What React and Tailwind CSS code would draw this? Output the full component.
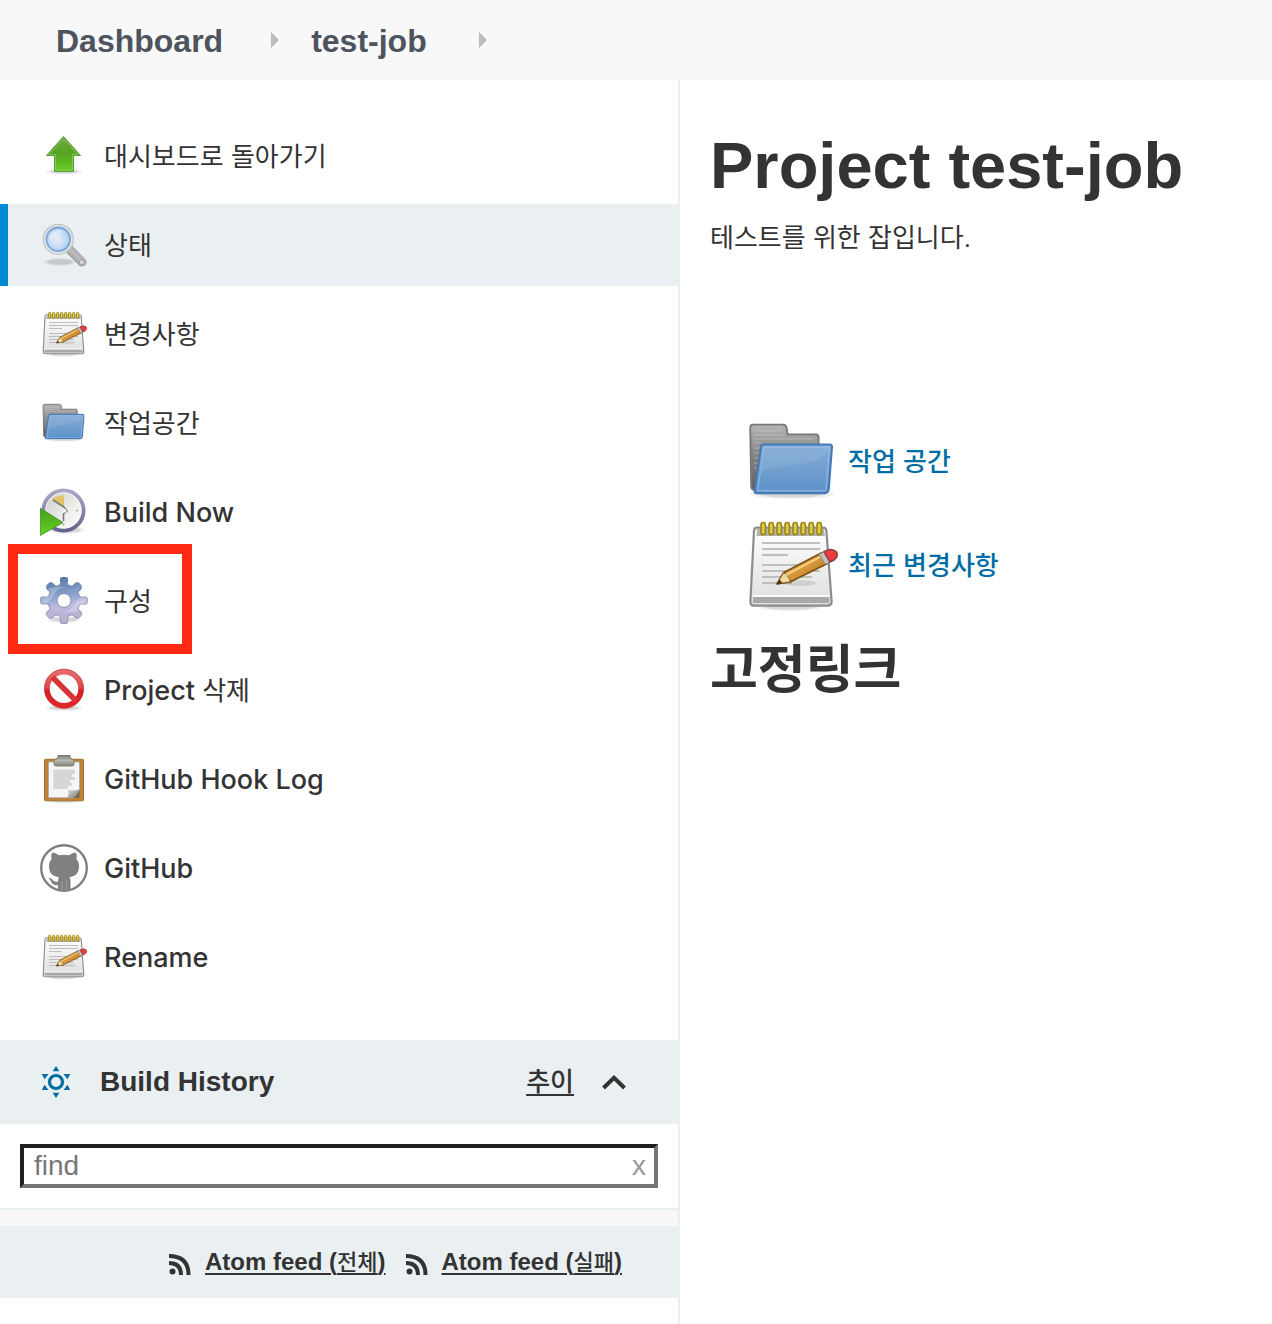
import React from "react";

const ICON = "size-12 shrink-0";

function Shadow({ cx = 24, cy = 41, rx = 17, ry = 3 }) {
  return (
    <>
      <ellipse cx={cx} cy={cy} rx={rx} ry={ry} fill="#000" opacity=".06" />
      <ellipse cx={cx} cy={cy} rx={rx * 0.8} ry={ry * 0.7} fill="#000" opacity=".1" />
    </>
  );
}

function UpIcon() {
  return (
    <svg viewBox="0 0 48 48" className={ICON} aria-hidden="true">
      <defs>
        <linearGradient id="up" x1="0" y1="0" x2="0" y2="1">
          <stop offset="0" stopColor="#6fa844" />
          <stop offset=".5" stopColor="#55a41f" />
          <stop offset="1" stopColor="#66cf28" />
        </linearGradient>
      </defs>
      <Shadow cx={24} cy={39.5} rx={18} ry={3} />
      <path d="M23.500 4.500 40.500 23.500H33.500V39.500H14.500V23.500H6.500Z" fill="url(#up)" stroke="#5c9c38" strokeWidth="1" strokeLinejoin="round" />
      <path d="M23.500 6.500 38 22.500H32.500V38H15.500V22.500H9Z" fill="none" stroke="#9fdc78" strokeWidth="1" opacity=".55" />
    </svg>
  );
}

function SearchIcon() {
  return (
    <svg viewBox="0 0 48 48" className={ICON} aria-hidden="true">
      <defs>
        <radialGradient id="lens" cx=".45" cy=".5" r=".6">
          <stop offset="0" stopColor="#e6effa" />
          <stop offset=".7" stopColor="#bcd6f2" />
          <stop offset="1" stopColor="#8fb6e2" />
        </radialGradient>
        <linearGradient id="handle" x1="0" y1="1" x2="1" y2="0">
          <stop offset="0" stopColor="#777" />
          <stop offset=".5" stopColor="#bdbdbd" />
          <stop offset="1" stopColor="#858585" />
        </linearGradient>
      </defs>
      <Shadow cx={20} cy={41} rx={16} ry={4} />
      <path d="M28 28 32 25 45.500 39Q47 42 45 44Q42 46 39.500 44.500L27 32Z" fill="url(#handle)" stroke="#9a9a9a" strokeWidth=".8" />
      <circle cx="41.800" cy="41.200" r="2.600" fill="#d8d8d8" stroke="#909090" strokeWidth=".8" />
      <circle cx="18.300" cy="18.300" r="15" fill="#e3e4e2" stroke="#c0c3c3" strokeWidth="1.300" />
      <circle cx="18.300" cy="18.300" r="11.800" fill="url(#lens)" stroke="#7ba5d8" strokeWidth="1.800" />
      <path d="M9.500 20C9 12 15 8 21 9.500C25 11 18 14 9.500 20Z" fill="#fff" opacity=".35" />
    </svg>
  );
}

const RINGS = [9.5, 13.5, 17.5, 21.5, 25.5, 29.5, 33.5, 37.5];
const LINES = [
  [12.5, 38],
  [15.5, 38],
  [18.5, 22],
  [23.5, 38],
  [26.5, 38],
  [29.5, 34],
  [32.5, 24],
];

function NotepadIcon({ id, className = ICON }) {
  return (
    <svg viewBox="0 0 48 48" className={className} aria-hidden="true">
      <defs>
        <linearGradient id={id + "p"} x1="0" y1="0" x2="0" y2="1">
          <stop offset="0" stopColor="#fff" />
          <stop offset="1" stopColor="#dedede" />
        </linearGradient>
        <linearGradient id={id + "w"} x1="0" y1="0" x2="1" y2="1">
          <stop offset="0" stopColor="#edb85d" />
          <stop offset=".5" stopColor="#d9983a" />
          <stop offset="1" stopColor="#9c661c" />
        </linearGradient>
      </defs>
      <Shadow cx={23} cy={44.5} rx={16} ry={2} />
      <path d="M6.500 4.800H39.500Q41 4.800 41.200 6.500L43.800 41.500Q43.900 43.800 41.800 43.800H5Q3 43.800 3.200 41.500L5 6.500Q5.100 4.800 6.500 4.800Z" fill={`url(#${id}p)`} stroke="#8c8c8c" strokeWidth="1.100" />
      <path d="M6.500 5.500H40L40.400 9H6.300Z" fill="#b3b3a8" />
      <path d="M4.500 39.500H42.600V42.500H4.500Z" fill="#a9a9a9" />
      <path d="M4.500 39H42.600" stroke="#fff" strokeWidth=".8" />
      {RINGS.map((x) => (
        <rect key={x} x={x - 1} y="2.300" width="2.200" height="6" rx="1.100" fill="#e2cc43" stroke="#9a8518" strokeWidth=".8" />
      ))}
      {LINES.map(([y, x2]) => (
        <path key={y} d={`M9 ${y}H${x2}`} stroke="#bfbfbf" strokeWidth="1.100" />
      ))}
      <ellipse cx="28" cy="32.500" rx="8" ry="1.500" fill="#000" opacity=".1" />
      <path d="M16.500 33 19.700 27.400 38.800 17.400 42 22.600 23 32Z" fill={`url(#${id}w)`} stroke="#7c4f12" strokeWidth=".8" strokeLinejoin="round" />
      <path d="M16.500 33 19.700 27.400Q21.500 27.600 21.800 29.300Q23.300 30 23 32Z" fill="#efd9a0" stroke="#7c5a20" strokeWidth=".5" />
      <path d="M16.300 33.100 17.700 30.800 19.400 32.600Z" fill="#4a3210" />
      <path d="M21 28.500 39 18.900" stroke="#f5cf86" strokeWidth="1" />
      <path d="M37.500 18.100 40 16.900 43 22 40.700 23.200Z" fill="#c4bfc0" stroke="#8b8182" strokeWidth=".5" />
      <path d="M40 16.900Q44 14.600 46.200 17Q47.800 20 43 22Z" fill="#ee3b3b" stroke="#8c4040" strokeWidth=".8" />
    </svg>
  );
}

function FolderIcon({ id, className = ICON }) {
  return (
    <svg viewBox="0 0 48 48" className={className} aria-hidden="true">
      <defs>
        <linearGradient id={id + "b"} x1="0" y1="0" x2="0" y2="1">
          <stop offset="0" stopColor="#b5b5b5" />
          <stop offset=".4" stopColor="#8a8a8a" />
          <stop offset="1" stopColor="#5c5c5c" />
        </linearGradient>
        <linearGradient id={id + "f"} x1="0" y1="0" x2="0" y2="1">
          <stop offset="0" stopColor="#83abd8" />
          <stop offset=".5" stopColor="#729fcf" />
          <stop offset="1" stopColor="#5b91cb" />
        </linearGradient>
      </defs>
      <Shadow cx={24} cy={40} rx={21} ry={2.5} />
      <path d="M4.500 5.300H19.500Q21 5.300 21.300 7L21.800 10.200H36Q37.300 10.200 37.300 11.500V38H5Q3.800 38 3.600 36.500L3.100 6.800Q3.100 5.300 4.500 5.300Z" fill={`url(#${id}b)`} stroke="#777" strokeWidth=".9" />
      <path d="M5 8.500H19M5 10.500H19M5 12.500H35M5 14.500H8M5 17H8M5 19.500H8M5 22H7.500M5 24.500H7M5 27H7" stroke="#cfcfcf" strokeWidth=".6" opacity=".5" />
      <path d="M9.800 15.300H42.900Q44.100 15.300 44 16.500L42.400 37.500Q42.200 39.600 40.200 39.600H6.200Q5.200 39.600 5.300 38.500L8.500 16.500Q8.700 15.300 9.800 15.300Z" fill={`url(#${id}f)`} stroke="#4479b5" strokeWidth="1" />
      <path d="M10 16.600H42.600L41.100 37.500Q41 38.400 40.100 38.400H6.800Z" fill="none" stroke="#a3c3e4" strokeWidth=".7" opacity=".6" />
      <path d="M10.300 17.300H42C41 26 22 24.500 8.600 29Z" fill="#fff" opacity=".08" />
    </svg>
  );
}

function ClockIcon() {
  return (
    <svg viewBox="0 0 48 48" className={ICON} aria-hidden="true">
      <defs>
        <linearGradient id="rim" x1="0" y1="0" x2="0" y2="1">
          <stop offset="0" stopColor="#a9a9c6" />
          <stop offset="1" stopColor="#66648f" />
        </linearGradient>
        <linearGradient id="face" x1="0" y1="0" x2="1" y2="1">
          <stop offset="0" stopColor="#c9c9c5" />
          <stop offset=".6" stopColor="#efefec" />
          <stop offset="1" stopColor="#fff" />
        </linearGradient>
        <linearGradient id="play" x1="0" y1="0" x2="0" y2="1">
          <stop offset="0" stopColor="#4a9d1f" />
          <stop offset="1" stopColor="#5fd41f" />
        </linearGradient>
      </defs>
      <Shadow cx={26} cy={42} rx={18} ry={4} />
      <circle cx="23.500" cy="22.500" r="20" fill="url(#face)" stroke="url(#rim)" strokeWidth="4" />
      <circle cx="23.500" cy="22.500" r="17.700" fill="none" stroke="#fff" strokeWidth=".8" />
      <path d="M12 11Q17 7.500 24 7.500V18.500Z" fill="#e2c266" />
      <path d="M13 12 24 19 27 23 23.500 26V33" fill="none" stroke="#77777c" strokeWidth="1.600" />
      <circle cx="24.500" cy="22.800" r="2" fill="#f5f5f5" />
      <circle cx="37" cy="22.500" r=".9" fill="#aaa" />
      <circle cx="23.500" cy="36.500" r=".9" fill="#999" />
      <path d="M0 20 23 34.500 0 47.500Z" fill="url(#play)" stroke="#4f9a35" strokeWidth="1" />
    </svg>
  );
}

const TEETH = [0, 45, 90, 135, 180, 225, 270, 315];

function GearIcon() {
  return (
    <svg viewBox="0 0 48 48" className={ICON} aria-hidden="true">
      <defs>
        <linearGradient id="gear" gradientUnits="userSpaceOnUse" x1="18" y1="0" x2="26" y2="48">
          <stop offset="0" stopColor="#5478ab" />
          <stop offset=".4" stopColor="#8aa3cd" />
          <stop offset=".6" stopColor="#bfbadd" />
          <stop offset="1" stopColor="#b3accf" />
        </linearGradient>
        <mask id="gearhole">
          <rect width="48" height="48" fill="#fff" />
          <circle cx="24" cy="23.500" r="6.700" fill="#000" />
        </mask>
        <clipPath id="gearshape">
          <circle cx="24" cy="23.500" r="16.500" />
          <path d="M20.500 9 20 3Q20 0 22 0H26Q28 0 28 3L27.500 9Z" />
          <path d="M20.500 38 20 44Q20 47 22 47H26Q28 47 28 44L27.500 38Z" />
          <path d="M9 20 3 19.500Q0 19.500 0 21.500V25.500Q0 27.500 3 27.500L9 27Z" />
          <path d="M39 20 45 19.500Q48 19.500 48 21.500V25.500Q48 27.500 45 27.500L39 27Z" />
          <path d="M11.500 17 6.500 12.500Q5.500 10.500 7 8L9 6Q11 4.500 13 6L18 11Z" />
          <path d="M36.500 17 41.500 12.500Q42.500 10.500 41 8L39 6Q37 4.500 35 6L30 11Z" />
          <path d="M11.500 30 6.500 34.500Q5.500 36.500 7 39L9 41Q11 42.500 13 41L18 36Z" />
          <path d="M36.500 30 41.500 34.500Q42.500 36.500 41 39L39 41Q37 42.500 35 41L30 36Z" />
        </clipPath>
      </defs>
      <Shadow cx={24} cy={42.5} rx={16} ry={3.5} />
      <g mask="url(#gearhole)">
        <g clipPath="url(#gearshape)">
          <rect width="48" height="48" fill="url(#gear)" />
          <path d="M0 30Q10 26 14 18T26 10Q8 8 0 18Z" fill="#fff" opacity=".25" />
          <path d="M48 18Q38 20 34 28T20 34Q38 38 48 28Z" fill="#fff" opacity=".25" />
        </g>
      </g>
      {TEETH.map((a) => (
        <path key={a} d="M19 8.200Q20.500 8 20.400 5.500V2.500Q20.500 .6 22.500 .6H25.500Q27.500 .6 27.600 2.500V5.500Q27.500 8 29 8.200Q30.500 8.800 32 9.500" transform={`rotate(${a} 24 23.5)`} fill="none" stroke="#667296" strokeWidth=".9" opacity=".5" />
      ))}
      <circle cx="24" cy="23.500" r="6.900" fill="none" stroke="#8791b3" strokeWidth=".9" />
    </svg>
  );
}

function DeleteIcon() {
  return (
    <svg viewBox="0 0 48 48" className={ICON} aria-hidden="true">
      <defs>
        <linearGradient id="stop" gradientUnits="userSpaceOnUse" x1="0" y1="3" x2="0" y2="43">
          <stop offset="0" stopColor="#e87070" />
          <stop offset=".45" stopColor="#dc4a4c" />
          <stop offset=".55" stopColor="#d22024" />
          <stop offset="1" stopColor="#e5292c" />
        </linearGradient>
      </defs>
      <Shadow cx={24} cy={42} rx={18} ry={3} />
      <circle cx="24" cy="22.700" r="17" fill="#fff" stroke="url(#stop)" strokeWidth="5.500" />
      <path d="M12.500 11.200 35.500 34.200" stroke="#d73538" strokeWidth="5.500" />
      <circle cx="24" cy="22.700" r="19.500" fill="none" stroke="#cc3a3d" strokeWidth=".8" />
    </svg>
  );
}

function ClipboardIcon() {
  return (
    <svg viewBox="0 0 48 48" className={ICON} aria-hidden="true">
      <defs>
        <linearGradient id="clip" x1="0" y1="0" x2="0" y2="1">
          <stop offset="0" stopColor="#777b72" />
          <stop offset=".5" stopColor="#b8bbb3" />
          <stop offset="1" stopColor="#80847a" />
        </linearGradient>
        <linearGradient id="curl" x1="0" y1="0" x2="1" y2="1">
          <stop offset="0" stopColor="#e4e4e4" />
          <stop offset="1" stopColor="#777" />
        </linearGradient>
      </defs>
      <Shadow cx={24} cy={46} rx={16} ry={2} />
      <rect x="4.500" y="4.300" width="39" height="41.500" rx="1" fill="#bd8235" stroke="#a06f2b" strokeWidth="1" />
      <path d="M8.500 7H39.500V36L33 42.700H8.500Z" fill="#f6f6f6" stroke="#a9a9a9" strokeWidth=".8" />
      <path d="M33 42.700H39.500V34.500Z" fill="#706350" />
      <path d="M39.500 34Q35 36.500 28 34.500Q29.500 40 27 42.700H33.500Q38 40 39.500 34Z" fill="url(#curl)" />
      <path d="M13.500 14.500H35V19H32V22H35V25H30V28H32V31H28V34H13.500Z" fill="#d6d6d6" />
      <path d="M18 0H30V3Q34 3.500 34 6.500V9Q34 11 32 11H16Q14 11 14 9V6.500Q14 3.500 18 3Z" fill="url(#clip)" stroke="#73776e" strokeWidth=".8" />
    </svg>
  );
}

function OctocatIcon() {
  return (
    <svg viewBox="0 0 48 48" className={ICON} aria-hidden="true">
      <circle cx="24" cy="24" r="22.800" fill="#fff" stroke="#808080" strokeWidth="2.400" />
      <path d="M12 8.500Q15.500 8.800 19 11.200Q24 10.200 29 11.200Q32.500 8.800 36 8.500Q37.300 12 36.500 15Q39.300 18 39 23Q38.700 32.500 29.500 33.300Q30.500 34.500 30.500 37V46H18V41.200Q13 42 11 37.500Q10 35 8.500 34.500Q9.500 33.200 11.500 34.700Q14 38.500 18 37.500Q18 34.800 19 33.300Q9.300 32.500 9 23Q8.700 18 11.500 15Q10.700 12 12 8.500Z" fill="#808080" />
      <path d="M22 37V46M26.500 37V46" stroke="#a0a0a0" strokeWidth="1" />
    </svg>
  );
}

function SunIcon() {
  return (
    <svg viewBox="-16 -16 32 32" className="size-8 shrink-0" fill="#006ea6" aria-hidden="true">
      <circle r="6.500" fill="none" stroke="#006ea6" strokeWidth="3.200" />
      <path d="M0-16 3.400-10.800H-3.400ZM0 16 3.400 10.800H-3.400Z" />
      <path d="M7.500-8H14.200L11.500-2.800ZM-7.500-8H-14.200L-11.500-2.800ZM7.500 8H14.200L11.500 2.800ZM-7.500 8H-14.200L-11.500 2.800Z" />
    </svg>
  );
}

function RssIcon() {
  return (
    <svg viewBox="0 0 22 22" className="mt-1 size-[22px] shrink-0" fill="none" stroke="#333" strokeWidth="4" aria-hidden="true">
      <circle cx="3.500" cy="18.500" r="3" fill="#333" stroke="none" />
      <path d="M0 10Q12 10 12 22" />
      <path d="M0 3Q19.500 3 19.500 22" />
    </svg>
  );
}

function Crumb() {
  return (
    <svg viewBox="0 0 8 16" className="h-4 w-2 shrink-0" fill="#bbb" aria-hidden="true">
      <path d="M0 0 8 8 0 16Z" />
    </svg>
  );
}

const Ko = ({ children }) => <span className="text-[26px] font-normal">{children}</span>;

const TASKS = [
  { icon: <UpIcon />, label: <Ko>대시보드로 돌아가기</Ko> },
  { icon: <SearchIcon />, label: <Ko>상태</Ko>, active: true },
  { icon: <NotepadIcon id="changes" />, label: <Ko>변경사항</Ko> },
  { icon: <FolderIcon id="workspace" />, label: <Ko>작업공간</Ko> },
  { icon: <ClockIcon />, label: "Build Now" },
  { icon: <GearIcon />, label: <Ko>구성</Ko>, marked: true },
  { icon: <DeleteIcon />, label: <>Project <Ko>삭제</Ko></> },
  { icon: <ClipboardIcon />, label: "GitHub Hook Log" },
  { icon: <OctocatIcon />, label: "GitHub" },
  { icon: <NotepadIcon id="rename" />, label: "Rename" },
];

function Task({ icon, label, active, marked }) {
  return (
    <li className="relative">
      <a
        href="#"
        aria-current={active ? "page" : undefined}
        className={
          "flex h-[82px] items-center gap-4 border-l-8 pl-8 font-['Inter','Noto_Sans_CJK_KR',sans-serif] text-[27px] leading-10 font-medium " +
          (active ? "border-[#0088d4] bg-[#eaeff2]" : "border-transparent")
        }
      >
        {icon}
        <span className="pt-0.5">{label}</span>
      </a>
      {marked && <div className="pointer-events-none absolute -top-4 -bottom-3 left-2 w-46 border-10 border-[#ff2a12]" />}
    </li>
  );
}

function Feed({ name }) {
  return (
    <a href="#" className="flex items-center gap-3.5">
      <RssIcon />
      <span className="underline decoration-2 underline-offset-3">
        Atom feed (<span className="text-[22px] font-medium">{name}</span>)
      </span>
    </a>
  );
}

export default function App() {
  return (
    <div className="flex min-h-screen flex-col bg-white font-['Liberation_Sans','Noto_Sans_CJK_KR',sans-serif] text-[#333]">
      <nav className="flex h-20 items-center bg-[#f8f8f8] px-14 text-[32px] font-bold text-[#4d545d]">
        <a href="#" className="mr-12 pt-0.5">Dashboard</a>
        <Crumb />
        <a href="#" className="mr-13 ml-8 pt-0.5">test-job</a>
        <Crumb />
      </nav>

      <div className="flex flex-1">
        <aside className="w-[680px] max-w-[54%] shrink-0 border-r-2 border-[#eaeff2]">
          <ul className="flex flex-col gap-[7px] pt-[35px] pb-[42px]">
            {TASKS.map((task, i) => (
              <Task key={i} {...task} />
            ))}
          </ul>

          <section>
            <header className="flex h-[84px] items-center bg-[#eaeff2] pr-13 pl-10 font-bold">
              <SunIcon />
              <h2 className="ml-7 flex-1 text-[28px]">Build History</h2>
              <a href="#" className="mr-7 text-[26px] font-medium underline decoration-2 underline-offset-3">추이</a>
              <button type="button" aria-label="Collapse">
                <svg viewBox="0 0 24 16" className="h-4 w-6" fill="none" stroke="#333" strokeWidth="4" aria-hidden="true">
                  <path d="M1.500 14 12 3.800 22.500 14" />
                </svg>
              </button>
            </header>
            <div className="border-b-2 border-[#eaeff2] p-5">
              <div className="flex h-11 items-center border-4 border-t-[#1f1f21] border-r-[#767676] border-b-[#767676] border-l-[#1f1f21] pr-2 pl-2.5 text-[28px]">
                <input type="text" placeholder="find" aria-label="find" className="min-w-0 flex-1 outline-none placeholder:text-[#767676]" />
                <button type="button" aria-label="Clear" className="leading-9 text-[#999]">x</button>
              </div>
            </div>
            <div className="h-4 bg-[#f8f8f8]" />
            <footer className="flex h-[72px] items-center justify-end gap-5 bg-[#eaeff2] pr-14 text-2xl font-bold">
              <Feed name="전체" />
              <Feed name="실패" />
            </footer>
          </section>
        </aside>

        <main className="flex-1 px-[30px] pt-13">
          <h1 className="text-[65px] leading-17 font-bold">Project test-job</h1>
          <p className="mt-4 text-[26px] leading-11">테스트를 위한 잡입니다.</p>
          <ul className="mt-[154px] ml-[34px] flex flex-col gap-2 text-[26px] font-medium text-[#006ea6]">
            <li>
              <a href="#" className="flex items-center gap-2">
                <FolderIcon id="workspaceLarge" className="size-24 shrink-0" />
                작업 공간
              </a>
            </li>
            <li>
              <a href="#" className="flex items-center gap-2">
                <NotepadIcon id="changesLarge" className="size-24 shrink-0" />
                최근 변경사항
              </a>
            </li>
          </ul>
          <h2 className="mt-5 text-[52px] leading-18 font-bold">고정링크</h2>
        </main>
      </div>
    </div>
  );
}
